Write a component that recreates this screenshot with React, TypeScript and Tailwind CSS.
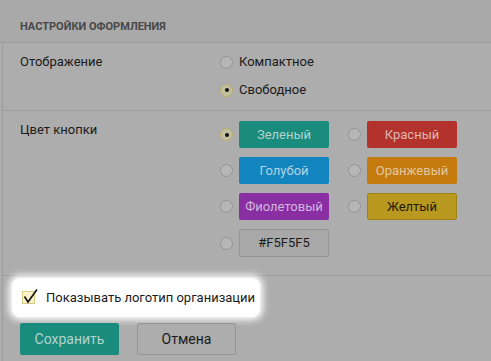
const FONT = "font-['Roboto',sans-serif]";

type Swatch = {
  label: string;
  className: string;
  checked?: boolean;
};

const SWATCHES: Swatch[] = [
  { label: "Зеленый", className: "bg-[#198c7e] text-[#b3d3cd]", checked: true },
  { label: "Красный", className: "bg-[#b3322b] text-[#dcb8b5]" },
  { label: "Голубой", className: "bg-[#1285bf] text-[#b6d2e3]" },
  { label: "Оранжевый", className: "bg-[#c47a0c] text-[#e2c8a3]" },
  { label: "Фиолетовый", className: "bg-[#8a2ea4] text-[#d3b6db]" },
  { label: "Желтый", className: "bg-[#b8981f] text-[#1f1a08] border border-[#9f8418]" },
  { label: "#F5F5F5", className: "bg-[#a8a8a8] text-[#1c1c1c] border border-[#959595]" },
];

// ─── Radio ────────────────────────────────────────────────────────────────────

function Radio({ checked }: { checked?: boolean }) {
  return checked ? (
    <span className="flex h-[13px] w-[13px] shrink-0 items-center justify-center rounded-full border-[1.5px] border-[#b8ad62] bg-[#c3c0a2]">
      <span className="h-[4px] w-[4px] rounded-full bg-[#111]" />
    </span>
  ) : (
    <span className="h-[13px] w-[13px] shrink-0 rounded-full border border-[#939393] bg-[#b6b6b6]" />
  );
}

// ─── App ──────────────────────────────────────────────────────────────────────

export default function App() {
  return (
    <div className={`h-[361px] w-[491px] overflow-hidden bg-[#adadad] text-[13px] text-[#1b1b1b] ${FONT}`}>
      {/* Header */}
      <div className="h-[43px] border-b border-[#9c9c9c] bg-[#a9a9a9] px-5 pt-[20px] text-[11px] font-bold uppercase leading-[13px] text-[#474747]">
        Настройки оформления
      </div>

      <div className="ml-[2px] h-full border-l border-[#9c9c9c]">
        {/* Display mode */}
        <div className="flex border-b border-[#9c9c9c] pb-[12px] pl-[17px] pt-[11px]">
          <div className="w-[200px] leading-4">Отображение</div>
          <div className="flex flex-col gap-3">
            <label className="flex h-4 items-center gap-[6px]">
              <Radio />
              Компактное
            </label>
            <label className="flex h-4 items-center gap-[6px]">
              <Radio checked />
              Свободное
            </label>
          </div>
        </div>

        {/* Button colour */}
        <div className="flex border-b border-[#9c9c9c] pb-[18px] pl-[17px] pt-[10px]">
          <div className="mt-[1px] w-[200px] leading-4">Цвет кнопки</div>
          <div className="grid grid-cols-[109px_109px] gap-x-[19px] gap-y-[9px]">
            {SWATCHES.map((s) => (
              <div key={s.label} className="flex items-center gap-[6px]">
                <Radio checked={s.checked} />
                <span
                  className={`flex h-[27px] w-[90px] items-center justify-center rounded-[2px] ${s.className} ${
                    s.label === "#F5F5F5" ? "h-[28px]" : ""
                  }`}
                >
                  {s.label}
                </span>
              </div>
            ))}
          </div>
        </div>

        {/* Spotlighted checkbox */}
        <div className="pl-[9px] pt-[2px]">
          <div className="flex h-[39px] w-[248px] items-center gap-[11px] rounded-lg bg-white pl-[10px] shadow-[0_0_7px_3px_#ffffff]">
            <span className="relative h-[13px] w-[13px] border border-[#dccb84] bg-[#fbf3cc]">
              <svg
                className="absolute -left-[1px] -top-[4px]"
                width="17"
                height="17"
                viewBox="0 0 17 17"
                fill="none"
              >
                <path d="M2.5 8.5 L6 14 L15 1.5" stroke="#111" strokeWidth="1.6" />
              </svg>
            </span>
            <span className="pt-[1px]">Показывать логотип организации</span>
          </div>
        </div>

        {/* Actions */}
        <div className="flex gap-[18px] pl-[17px] pt-[6px]">
          <button className="h-[32px] w-[99px] rounded-[2px] bg-[#198c7e] text-[14px] text-[#b3d3cd]">
            Сохранить
          </button>
          <button className="h-[32px] w-[99px] rounded-[2px] border border-[#959595] bg-[#adadad] text-[14px] text-[#1b1b1b]">
            Отмена
          </button>
        </div>
      </div>
    </div>
  );
}
